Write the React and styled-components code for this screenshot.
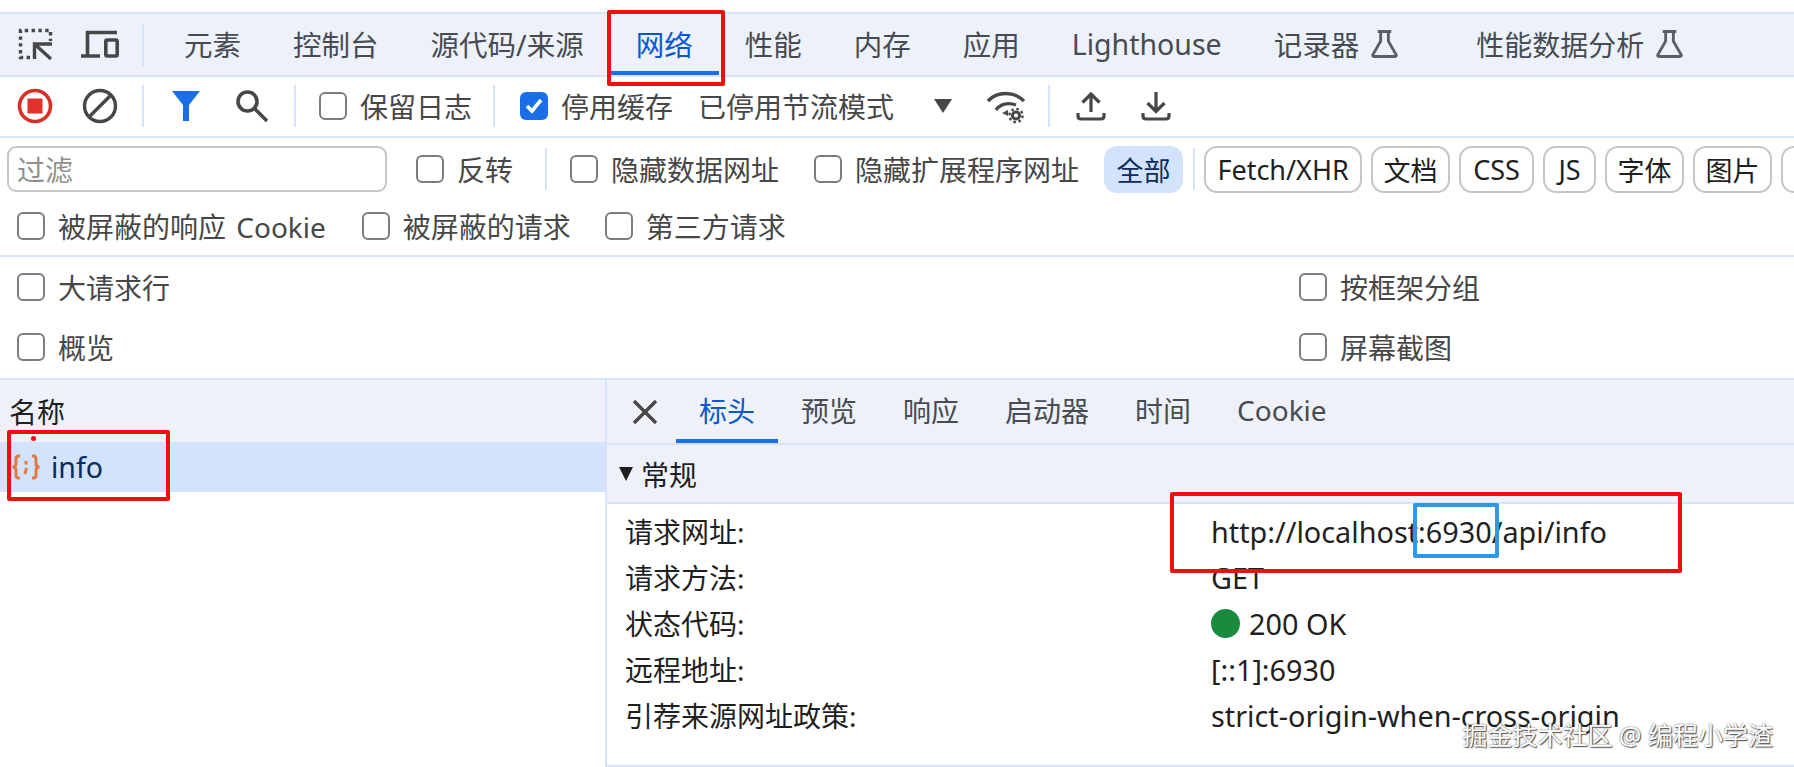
import styled, { createGlobalStyle } from 'styled-components';

const GlobalStyle = createGlobalStyle`
  html, body {
    margin: 0;
    background: #fff;
  }
  body {
    font-family: "Noto Sans", "Noto Sans CJK SC", sans-serif;
    color: #474747;
  }
`;

const Page = styled.div`
  position: relative;
  width: 1794px;
  height: 767px;
  overflow: hidden;
  padding-top: 12px;
  box-sizing: border-box;
`;

const TabBar = styled.div`
  display: flex;
  align-items: center;
  height: 61px;
  padding-left: 18px;
  background: #edf2fa;
  border-top: 2px solid #d6e3fb;
  border-bottom: 2px solid #d6e3fb;
`;

const IconSlot = styled.span`
  display: flex;
  align-items: center;
  justify-content: center;
  flex: none;
  width: ${(p) => p.$w || 36}px;
  margin-left: ${(p) => p.$ml || 0}px;
`;

const Sep = styled.span`
  flex: none;
  width: 2px;
  height: ${(p) => p.$h || 42}px;
  margin-left: ${(p) => p.$ml || 0}px;
  background: #d6e3fb;
`;

const Tab = styled.div`
  display: flex;
  align-items: center;
  gap: 12px;
  box-sizing: border-box;
  height: 100%;
  margin-left: ${(p) => p.$ml || 0}px;
  padding: 0 26px 2px;
  font-size: ${(p) => p.$fs || 28.5}px;
  color: ${(p) => (p.$active ? '#0b57d0' : '#474b52')};
  box-shadow: ${(p) => (p.$active ? 'inset 0 -4px 0 #1a6ee8' : 'none')};
  white-space: nowrap;
`;

const Toolbar = styled.div`
  display: flex;
  align-items: center;
  box-sizing: border-box;
  height: 61px;
  padding: 0 0 2px 17px;
  border-bottom: 2px solid #d6e3fb;
`;

const Option = styled.label`
  display: flex;
  align-items: center;
  flex: none;
  gap: 13px;
  margin-left: ${(p) => p.$ml || 0}px;
  font-size: 28px;
  word-spacing: 3px;
  color: #474747;
  white-space: nowrap;
`;

const Box = styled.span`
  display: flex;
  align-items: center;
  justify-content: center;
  flex: none;
  box-sizing: border-box;
  width: 28px;
  height: 28px;
  border-radius: 6px;
  border: ${(p) => (p.$checked ? 'none' : '2px solid #7d7d7d')};
  background: ${(p) => (p.$checked ? '#1a6ee8' : '#fff')};
`;

const Plain = styled.span`
  flex: none;
  margin-left: ${(p) => p.$ml || 0}px;
  font-size: 28px;
  white-space: nowrap;
`;

const Caret = styled.span`
  flex: none;
  width: 0;
  height: 0;
  margin-left: ${(p) => p.$ml || 0}px;
  border-left: ${(p) => p.$w / 2}px solid transparent;
  border-right: ${(p) => p.$w / 2}px solid transparent;
  border-top: ${(p) => p.$h}px solid ${(p) => p.$c || '#474747'};
`;

const Filters = styled.div`
  height: 117px;
  border-bottom: 2px solid #d6e3fb;
  display: flex;
  flex-direction: column;
`;

const FilterRow = styled.div`
  display: flex;
  align-items: center;
  flex: none;
  height: ${(p) => p.$h}px;
  padding-left: ${(p) => p.$pl}px;
`;

const FilterInput = styled.div`
  box-sizing: border-box;
  flex: none;
  display: flex;
  align-items: center;
  width: 380px;
  height: 46px;
  padding-left: 8px;
  border: 2px solid #c4c7c5;
  border-radius: 9px;
  font-size: 28px;
  color: #8f8f8f;
`;

const Chip = styled.span`
  box-sizing: border-box;
  flex: none;
  display: flex;
  align-items: center;
  justify-content: center;
  width: ${(p) => p.$w}px;
  height: 47px;
  margin-left: ${(p) => p.$ml ?? 9}px;
  border: ${(p) => (p.$active ? 'none' : '2px solid #c4c7c5')};
  border-radius: 13px;
  background: ${(p) => (p.$active ? '#d3e3fd' : '#fff')};
  color: ${(p) => (p.$active ? '#0a2c5e' : '#1f1f1f')};
  font-size: 27px;
  white-space: nowrap;
`;

const Settings = styled.div`
  display: grid;
  grid-template-columns: 1282px 1fr;
  grid-auto-rows: 60px;
  align-items: center;
  height: 121px;
  padding-left: 17px;
  border-bottom: 2px solid #d6e3fb;
`;

const Split = styled.div`
  display: flex;
  height: 387px;
`;

const Requests = styled.div`
  flex: none;
  width: 605px;
  border-right: 2px solid #d6e3fb;
`;

const NameHeader = styled.div`
  display: flex;
  align-items: center;
  height: 62px;
  padding-left: 9px;
  background: #eef2f8;
  color: #1f1f1f;
  font-size: 28px;
`;

const RequestRow = styled.div`
  display: flex;
  align-items: center;
  gap: 10px;
  height: 50px;
  padding-left: 11px;
  background: #d3e3fd;
  color: #0a2c5e;
  font-size: 28.5px;
`;

const Details = styled.div`
  flex: 1;
  display: flex;
  flex-direction: column;
  height: 385px;
  border-bottom: 2px solid #d6e3fb;
`;

const DetailTabs = styled.div`
  display: flex;
  align-items: center;
  flex: none;
  height: 65px;
  padding-left: 25px;
  background: #eef2f8;
  border-bottom: 2px solid #d6e3fb;
  box-sizing: border-box;
`;

const DetailTab = styled.div`
  display: flex;
  align-items: center;
  box-sizing: border-box;
  height: 100%;
  margin-left: ${(p) => p.$ml || 0}px;
  padding: 0 23px 4px;
  font-size: 28px;
  color: ${(p) => (p.$active ? '#0b57d0' : '#474b52')};
  box-shadow: ${(p) => (p.$active ? 'inset 0 -4px 0 #1a6ee8' : 'none')};
`;

const SectionHeader = styled.div`
  display: flex;
  align-items: center;
  flex: none;
  gap: 8px;
  height: 59px;
  box-sizing: border-box;
  padding-left: 12px;
  background: #eef2f8;
  border-bottom: 2px solid #d6e3fb;
  color: #1f1f1f;
  font-size: 28px;
`;

const Rows = styled.div`
  display: grid;
  grid-template-columns: 586px 1fr;
  grid-auto-rows: 46px;
  align-items: center;
  padding: 4px 0 0 18px;
  color: #1f1f1f;
  font-size: 28px;
`;

const Value = styled.div`
  display: flex;
  align-items: center;
  gap: 9px;
  font-size: 28.8px;
  white-space: nowrap;
`;

const GreenDot = styled.span`
  width: 29px;
  height: 29px;
  border-radius: 50%;
  background: #1a8a3e;
`;

const Mark = styled.div`
  position: absolute;
  left: ${(p) => p.$x}px;
  top: ${(p) => p.$y}px;
  width: ${(p) => p.$w}px;
  height: ${(p) => p.$h}px;
  box-sizing: border-box;
  border: ${(p) => p.$b || 3}px solid ${(p) => p.$c || '#f00f0f'};
  border-radius: 2px;
`;

const RedDot = styled.span`
  position: absolute;
  left: 31px;
  top: 436px;
  width: 5px;
  height: 5px;
  border-radius: 50%;
  background: #f00f0f;
`;

const Watermark = styled.div`
  position: absolute;
  right: 21px;
  top: 716px;
  font-size: 25px;
  color: #fff;
  text-shadow: 0 0 2px #555, 1px 1px 1px #555;
  white-space: nowrap;
`;

const Stroke = ({ size = 36, children, w = 3.4, c = '#474747' }) => (
  <svg width={size} height={size} viewBox="0 0 36 36" fill="none" stroke={c} strokeWidth={w}>
    {children}
  </svg>
);

const InspectIcon = () => (
  <Stroke>
    <path d="M12 30.5H2.5V3.5H32.5V14" strokeDasharray="3.4 3.4" />
    <path d="M33 32L16.5 17M16.5 32V17H34" />
  </Stroke>
);

const DeviceIcon = () => (
  <svg width="38" height="36" viewBox="0 0 38 36" fill="none" stroke="#474747" strokeWidth="3.6">
    <path d="M36 5.5H6.5V29M0 29h19" />
    <rect x="24.8" y="13" width="11.4" height="16" rx="1.5" />
  </svg>
);

const RecordIcon = () => (
  <svg width="36" height="36" viewBox="0 0 36 36">
    <circle cx="18" cy="18" r="15.5" fill="none" stroke="#d93025" strokeWidth="3.6" />
    <rect x="10.5" y="10.5" width="15" height="15" fill="#e0332b" />
  </svg>
);

const ClearIcon = () => (
  <Stroke>
    <circle cx="18" cy="18" r="15.5" />
    <path d="M7 29L29 7" />
  </Stroke>
);

const FunnelIcon = () => (
  <svg width="30" height="32" viewBox="0 0 30 32">
    <path d="M1 1h28L18 15v16h-6V15z" fill="#1a6ee8" />
  </svg>
);

const SearchIcon = () => (
  <Stroke w={3.6}>
    <circle cx="13.5" cy="13.5" r="9.5" />
    <path d="M20 20l13 13" />
  </Stroke>
);

const WifiIcon = () => (
  <svg width="40" height="36" viewBox="0 0 40 36" fill="none" stroke="#474747" strokeWidth="3.4">
    <path d="M2 13C11 3 28 3 38 13" />
    <path d="M10 22C14 16 22 14 30 17" />
    <path d="M16 25l6-3v6z" fill="#474747" stroke="none" />
    <circle cx="30" cy="27.5" r="3.6" strokeWidth="3" />
    <circle cx="30" cy="27.5" r="6.6" strokeWidth="2.4" strokeDasharray="2.6 2.6" />
  </svg>
);

const UploadIcon = () => (
  <svg width="30" height="30" viewBox="0 0 30 30" fill="none" stroke="#474747" strokeWidth="3.2">
    <path d="M15 21V3M6.5 11.5L15 3l8.500 8.500" />
    <path d="M2 22v3q0 3 3 3h20q3 0 3-3v-3" />
  </svg>
);

const DownloadIcon = () => (
  <svg width="30" height="30" viewBox="0 0 30 30" fill="none" stroke="#474747" strokeWidth="3.2">
    <path d="M15 1v19M6.500 12L15 20.500 23.500 12" />
    <path d="M2 22v3q0 3 3 3h20q3 0 3-3v-3" />
  </svg>
);

const FlaskIcon = () => (
  <svg width="27" height="30" viewBox="0 0 28 30" fill="none" stroke="#5a5f66" strokeWidth="3">
    <path d="M7 2h14M10 2v10L2 26q-1 2 2 2h20q3 0 2-2L18 12V2" />
  </svg>
);

const CloseIcon = () => (
  <svg width="26" height="26" viewBox="0 0 26 26" fill="none" stroke="#474747" strokeWidth="3.4">
    <path d="M2 2l22 22M24 2L2 24" />
  </svg>
);

const FetchIcon = () => (
  <svg width="30" height="26" viewBox="0 0 30 26" fill="none" stroke="#dd7a45" strokeWidth="3">
    <path d="M9 2H7.500Q5 2 5 5v4.500Q5 13 1.500 13 5 13 5 16.500V21q0 3 2.500 3H9" />
    <path d="M21 2h1.500Q25 2 25 5v4.500q0 3.500 3.500 3.500-3.500 0-3.500 3.500V21q0 3-2.500 3H21" />
    <path d="M15 7v3.500M15.500 14l-1.500 6" />
  </svg>
);

const CheckMark = () => (
  <svg width="20" height="18" viewBox="0 0 20 18" fill="none" stroke="#fff" strokeWidth="3.6">
    <path d="M3 9l5 5L17 3" />
  </svg>
);

const Check = ({ checked, ml, children }) => (
  <Option $ml={ml}>
    <Box $checked={checked}>{checked && <CheckMark />}</Box>
    {children}
  </Option>
);

export default function App() {
  return (
    <Page>
      <GlobalStyle />
      <TabBar>
        <IconSlot><InspectIcon /></IconSlot>
        <IconSlot $w={38} $ml={27}><DeviceIcon /></IconSlot>
        <Sep $ml={23} $h={42} />
        <Tab $ml={14}>元素</Tab>
        <Tab>控制台</Tab>
        <Tab>源代码/来源</Tab>
        <Tab $active>网络</Tab>
        <Tab>性能</Tab>
        <Tab>内存</Tab>
        <Tab>应用</Tab>
        <Tab>Lighthouse</Tab>
        <Tab>记录器 <FlaskIcon /></Tab>
        <Tab $ml={26} $fs={28}>性能数据分析 <FlaskIcon /></Tab>
      </TabBar>

      <Toolbar>
        <IconSlot><RecordIcon /></IconSlot>
        <IconSlot $ml={29}><ClearIcon /></IconSlot>
        <Sep $ml={24} />
        <IconSlot $w={30} $ml={27}><FunnelIcon /></IconSlot>
        <IconSlot $ml={33}><SearchIcon /></IconSlot>
        <Sep $ml={24} />
        <Check ml={23}>保留日志</Check>
        <Sep $ml={21} />
        <Check ml={25} checked>停用缓存</Check>
        <Plain $ml={25}>已停用节流模式</Plain>
        <Caret $ml={40} $w={19} $h={14} />
        <IconSlot $w={40} $ml={34}><WifiIcon /></IconSlot>
        <Sep $ml={22} />
        <IconSlot $ml={23}><UploadIcon /></IconSlot>
        <IconSlot $ml={29}><DownloadIcon /></IconSlot>
      </Toolbar>

      <Filters>
        <FilterRow $h={62} $pl={7}>
          <FilterInput>过滤</FilterInput>
          <Check ml={29}>反转</Check>
          <Sep $ml={32} />
          <Check ml={23}>隐藏数据网址</Check>
          <Check ml={35}>隐藏扩展程序网址</Check>
          <Chip $active $w={79} $ml={25}>全部</Chip>
          <Sep $ml={10} />
          <Chip $w={158} $ml={9}>Fetch/XHR</Chip>
          <Chip $w={79}>文档</Chip>
          <Chip $w={75}>CSS</Chip>
          <Chip $w={53}>JS</Chip>
          <Chip $w={79}>字体</Chip>
          <Chip $w={79}>图片</Chip>
          <Chip $w={79}>媒体</Chip>
        </FilterRow>
        <FilterRow $h={51} $pl={17}>
          <Check>被屏蔽的响应 Cookie</Check>
          <Check ml={36}>被屏蔽的请求</Check>
          <Check ml={34}>第三方请求</Check>
        </FilterRow>
      </Filters>

      <Settings>
        <Check>大请求行</Check>
        <Check>按框架分组</Check>
        <Check>概览</Check>
        <Check>屏幕截图</Check>
      </Settings>

      <Split>
        <Requests>
          <NameHeader>名称</NameHeader>
          <RequestRow><FetchIcon />info</RequestRow>
        </Requests>
        <Details>
          <DetailTabs>
            <CloseIcon />
            <DetailTab $ml={18} $active>标头</DetailTab>
            <DetailTab>预览</DetailTab>
            <DetailTab>响应</DetailTab>
            <DetailTab>启动器</DetailTab>
            <DetailTab>时间</DetailTab>
            <DetailTab>Cookie</DetailTab>
          </DetailTabs>
          <SectionHeader>
            <Caret $w={15} $h={14} $c="#1f1f1f" />
            常规
          </SectionHeader>
          <Rows>
            <div>请求网址:</div>
            <Value>http://localhost:6930/api/info</Value>
            <div>请求方法:</div>
            <Value>GET</Value>
            <div>状态代码:</div>
            <Value><GreenDot />200 OK</Value>
            <div>远程地址:</div>
            <Value>[::1]:6930</Value>
            <div>引荐来源网址政策:</div>
            <Value>strict-origin-when-cross-origin</Value>
          </Rows>
        </Details>
      </Split>

      <Mark $x={607} $y={10} $w={118} $h={76} $b={4} />
      <Mark $x={7} $y={430} $w={163} $h={71} $b={4} />
      <Mark $x={1170} $y={492} $w={512} $h={81} $b={4} />
      <Mark $x={1413} $y={503} $w={86} $h={55} $b={4} $c="#2f97e8" />
      <RedDot />
      <Watermark>掘金技术社区 @ 编程小学渣</Watermark>
    </Page>
  );
}
